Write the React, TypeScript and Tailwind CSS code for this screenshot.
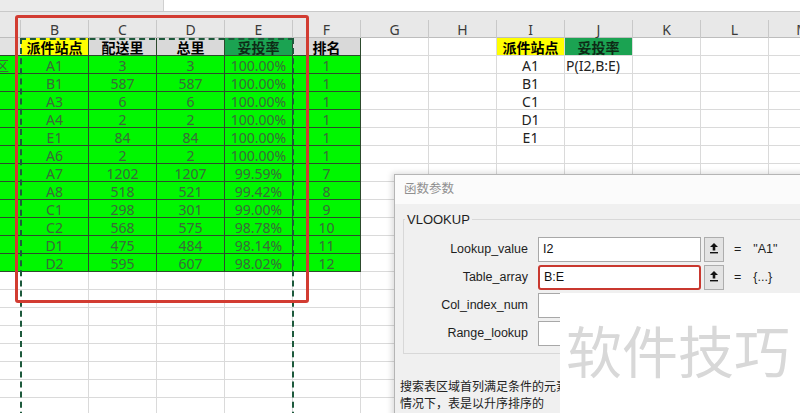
import React from 'react';

const COLS = ['B', 'C', 'D', 'E', 'F', 'G', 'H', 'I', 'J', 'K', 'L', 'M'];

const rows = [
  ['A1', '3', '3', '100.00%', '1'],
  ['B1', '587', '587', '100.00%', '1'],
  ['A3', '6', '6', '100.00%', '1'],
  ['A4', '2', '2', '100.00%', '1'],
  ['E1', '84', '84', '100.00%', '1'],
  ['A6', '2', '2', '100.00%', '1'],
  ['A7', '1202', '1207', '99.59%', '7'],
  ['A8', '518', '521', '99.42%', '8'],
  ['C1', '298', '301', '99.00%', '9'],
  ['C2', '568', '575', '98.78%', '10'],
  ['D1', '475', '484', '98.14%', '11'],
  ['D2', '595', '607', '98.02%', '12'],
];

const lookup = ['A1', 'B1', 'C1', 'D1', 'E1'];

const font = { fontFamily: '"Noto Sans", "Noto Sans CJK SC", sans-serif' };

function Cell({ className = '', children }: { className?: string; children?: React.ReactNode }) {
  return (
    <div className={`w-[68px] h-[18px] shrink-0 flex items-center justify-center border-r border-b text-[14px] leading-none pt-[2px] ${className}`}>
      {children}
    </div>
  );
}

function UpButton() {
  return (
    <div className="w-[20px] h-[25px] shrink-0 bg-[#e3e3e3] border border-[#adadad] flex items-start justify-center pt-[4px]">
      <svg width="10" height="12" viewBox="0 0 10 12">
        <path d="M5 1 L9 5 L6.3 5 L6.3 8.5 L3.7 8.5 L3.7 5 L1 5 Z" fill="#111" />
        <rect x="1" y="10" width="8" height="1.4" fill="#111" />
      </svg>
    </div>
  );
}

function ArgRow({ label, value, result, active }: { label: string; value?: string; result?: string; active?: boolean }) {
  return (
    <div className="flex items-center h-[25px]">
      <div className="w-[125px] text-right text-[12.5px] text-[#1e1e1e] pr-[1px]">{label}</div>
      <div
        className={`ml-[9px] w-[163px] h-[25px] bg-white flex items-center px-[4px] text-[12.5px] text-[#111] ${
          active ? 'border-2 border-[#c9382f] rounded-[3px]' : 'border border-[#a8a8a8]'
        }`}
      >
        {value}
      </div>
      {value !== undefined && (
        <>
          <div className="ml-[3px]">
            <UpButton />
          </div>
          <div className="ml-[10px] text-[12.5px] text-[#1e1e1e] flex gap-[12px]">
            <span>=</span>
            <span>{result}</span>
          </div>
        </>
      )}
    </div>
  );
}

export default function App() {
  const emptyRows = Array.from({ length: 9 });

  return (
    <div className="relative w-[800px] h-[413px] overflow-hidden bg-white" style={font}>
      {/* formula strip */}
      <div className="flex h-[12px] border-b border-[#c9c9c9] bg-[#ebebeb]">
        <div className="w-[163px]" />
        <div className="flex-1 bg-white border-l border-[#d0d0d0]" />
      </div>

      {/* column letters */}
      <div className="flex h-[26px] bg-[#e8e8e8] border-b border-[#bdbdbd]">
        <div className="w-[21px] shrink-0 mt-[8px] border-r border-[#c8c8c8]" />
        {COLS.map((c) => (
          <div
            key={c}
            className="w-[68px] shrink-0 mt-[8px] h-[18px] flex items-center justify-center border-r border-[#c8c8c8] text-[14px] text-[#3a3a3a]"
          >
            {c}
          </div>
        ))}
      </div>

      {/* row 1 */}
      <div className="flex font-bold">
        <div className="w-[21px] h-[18px] shrink-0 bg-[#e2e2e2] border-b border-[#2d4a2d]" />
        <Cell className="bg-[#ffff00] border-[#2d4a2d]">派件站点</Cell>
        <Cell className="bg-[#d9d9d9] border-[#2d4a2d]">配送里</Cell>
        <Cell className="bg-[#d9d9d9] border-[#2d4a2d]">总里</Cell>
        <Cell className="bg-[#1ba352] border-[#2d4a2d] text-[#0e2a16]">妥投率</Cell>
        <Cell className="bg-[#d9d9d9] border-[#2d4a2d]">排名</Cell>
        <Cell className="border-[#dadada]" />
        <Cell className="border-[#dadada]" />
        <Cell className="bg-[#ffff00] border-[#dadada]">派件站点</Cell>
        <Cell className="bg-[#1ba352] border-[#dadada] text-[#0e2a16]">妥投率</Cell>
        <Cell className="border-[#dadada]" />
        <Cell className="border-[#dadada]" />
        <Cell className="border-[#dadada]" />
      </div>

      {/* data rows */}
      {rows.map((r, i) => (
        <div key={i} className="flex">
          <div className="w-[21px] h-[18px] shrink-0 bg-[#00f700] border-b border-[#2d4a2d] overflow-hidden flex items-center justify-end pr-[12px] pt-[2px] text-[14px] text-[#3a6a3a]">
            {i === 0 ? <span className="shrink-0">区</span> : null}
          </div>
          {r.map((v, j) => (
            <Cell key={j} className={`bg-[#00f700] border-[#2d4a2d] text-[#3a6a3a] ${j === 0 ? 'text-[13px]' : ''}`}>
              {v}
            </Cell>
          ))}
          <Cell className="border-[#dadada]" />
          <Cell className="border-[#dadada]" />
          <Cell className="border-[#dadada] text-[#222]">{lookup[i]}</Cell>
          <Cell className="border-[#dadada] text-[#222] !justify-start pl-[1px]">{i === 0 ? 'P(I2,B:E)' : ''}</Cell>
          <Cell className="border-[#dadada]" />
          <Cell className="border-[#dadada]" />
          <Cell className="border-[#dadada]" />
        </div>
      ))}

      {emptyRows.map((_, i) => (
        <div key={i} className="flex">
          <div className="w-[21px] h-[18px] shrink-0 border-b border-[#dadada]" />
          {COLS.map((c) => (
            <Cell key={c} className="border-[#dadada]" />
          ))}
        </div>
      ))}

      {/* copy marquee */}
      <div className="absolute left-[20px] top-[38px] w-[274px] h-[400px] border-2 border-b-0 border-dashed border-[#1d5a3c]" />

      {/* red highlight */}
      <div className="absolute left-[15px] top-[15px] w-[294px] h-[288px] border-[3px] border-[#d23c32] rounded-[3px]" />

      {/* function arguments dialog */}
      <div className="absolute left-[394px] top-[174px] w-[420px] h-[260px] bg-[#f0f0f0] border-l border-t border-[#b5b5b5] shadow-[-2px_-1px_6px_rgba(0,0,0,0.15)] flex flex-col">
        <div className="h-[29px] bg-[#fbfbfb] flex items-center pl-[9px] text-[12.5px] text-[#8f8f8f]">函数参数</div>
        <div className="relative ml-[8px] mt-[15px] h-[135px] border border-[#d8d8d8] pt-[17px] flex flex-col gap-[3px]" style={{ fontFamily: '"Liberation Sans", Arial, sans-serif' }}>
          <div className="absolute -top-[10px] left-[1px] bg-[#f0f0f0] px-[2px] text-[13px] text-[#1e1e1e]">VLOOKUP</div>
          <ArgRow label="Lookup_value" value="I2" result={'"A1"'} />
          <ArgRow label="Table_array" value="B:E" result="{...}" active />
          <ArgRow label="Col_index_num" />
          <ArgRow label="Range_lookup" />
        </div>
        <div className="mt-[24px] pl-[5px] text-[12px] leading-[17px] text-[#222] whitespace-nowrap">
          <div>搜索表区域首列满足条件的元素，确定待检索单元格在区域中的行序号</div>
          <div>情况下，表是以升序排序的</div>
        </div>
      </div>

      {/* watermark */}
      <div className="absolute left-[560px] top-[293px] w-[240px] h-[120px] bg-white pl-[6px] pt-[30px]">
        <div className="text-[56px] leading-none text-[#d8d8d8] whitespace-nowrap">软件技巧</div>
      </div>
    </div>
  );
}
